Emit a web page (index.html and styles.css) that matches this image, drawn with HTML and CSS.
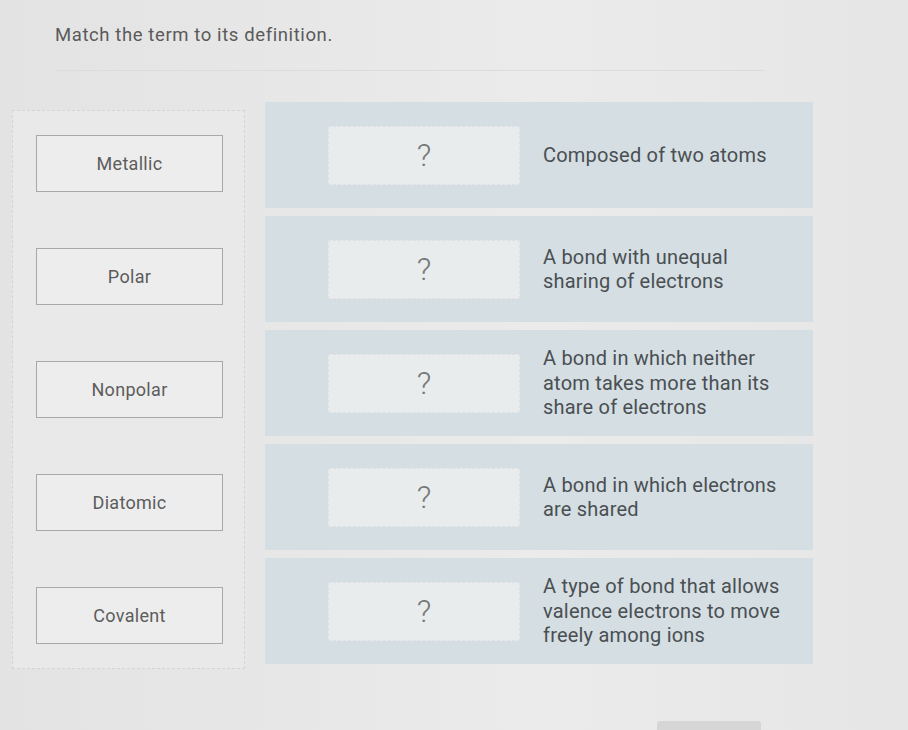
FILE: index.html
```html
<!DOCTYPE html>
<html lang="en">
<head>
    <meta charset="UTF-8">
    <title>Match the term to its definition</title>
    <link rel="stylesheet" href="styles.css">
</head>
<body>
    <div class="question">
        <p class="prompt">Match the term to its definition.</p>
        <div class="divider"></div>

        <div class="matching">
            <div class="terms">
                <div class="term-slot"><div class="term">Metallic</div></div>
                <div class="term-slot"><div class="term">Polar</div></div>
                <div class="term-slot"><div class="term">Nonpolar</div></div>
                <div class="term-slot"><div class="term">Diatomic</div></div>
                <div class="term-slot"><div class="term">Covalent</div></div>
            </div>

            <div class="pairs">
                <div class="pair">
                    <div class="drop">?</div>
                    <div class="definition">Composed of two atoms</div>
                </div>
                <div class="pair">
                    <div class="drop">?</div>
                    <div class="definition">A bond with unequal<br>sharing of electrons</div>
                </div>
                <div class="pair">
                    <div class="drop">?</div>
                    <div class="definition">A bond in which neither<br>atom takes more than its<br>share of electrons</div>
                </div>
                <div class="pair">
                    <div class="drop">?</div>
                    <div class="definition">A bond in which electrons<br>are shared</div>
                </div>
                <div class="pair">
                    <div class="drop">?</div>
                    <div class="definition">A type of bond that allows<br>valence electrons to move<br>freely among ions</div>
                </div>
            </div>
        </div>

        <div class="actions">
            <button class="submit"></button>
        </div>
    </div>
</body>
</html>
```

FILE: styles.css
```css
body {
    margin: 0;
    background: linear-gradient(to right, #e3e3e3, #ebebeb 60%, #e6e6e6);
    font-family: Roboto, "Noto Sans", sans-serif;
    color: #555;
    height: 730px;
    overflow: hidden;
}

.question {
    padding: 24px 0 0 12px;
}

.prompt {
    margin: 0 0 0 43px;
    font-size: 18.5px;
    letter-spacing: 0.6px;
    color: #5a5a5a;
}

.divider {
    margin: 24px 0 0 43px;
    width: 710px;
    border-bottom: 1px solid #dcdcdc;
}

.matching {
    display: grid;
    grid-template-columns: 233px 548px;
    gap: 20px;
    margin-top: 31px;
}

.terms {
    margin-top: 8px;
    border: 1px dashed #d4d4d4;
    background: #e9e9e9;
    display: flex;
    flex-direction: column;
    gap: 8px;
}

.term-slot {
    height: 105px;
    display: flex;
    align-items: center;
    padding-left: 23px;
}

.term {
    width: 185px;
    height: 55px;
    border: 1px solid #a8a8a8;
    background: #ededed;
    display: flex;
    align-items: center;
    justify-content: center;
    font-size: 18px;
    letter-spacing: 0.3px;
    color: #5c5c5c;
}

.pairs {
    display: flex;
    flex-direction: column;
    gap: 8px;
}

.pair {
    min-height: 106px;
    background: #d4dee3;
    display: flex;
    align-items: center;
    padding-left: 63px;
    gap: 23px;
}

.drop {
    width: 190px;
    height: 57px;
    background: #e9eced;
    border: 1px dashed #dde1e3;
    display: flex;
    align-items: center;
    justify-content: center;
    font-size: 32px;
    font-weight: 300;
    color: #777;
}

.definition {
    font-size: 20px;
    line-height: 24.5px;
    letter-spacing: 0.2px;
    color: #4a4f52;
}

.actions {
    display: flex;
    padding-left: 645px;
    margin-top: 52px;
}

.submit {
    width: 104px;
    height: 30px;
    border: none;
    border-radius: 3px;
    background: #d6d6d6;
}
```
